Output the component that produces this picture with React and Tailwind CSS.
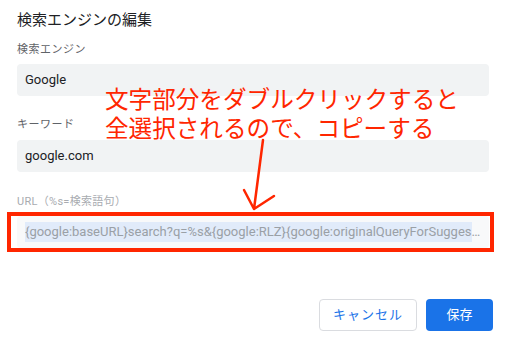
import React from 'react';

export default function App() {
    const inputBase = "h-[32px] rounded-[4px] px-[8px] flex items-center text-[13px]";

    return (
        <div className="relative w-[508px] h-[341px] bg-white overflow-hidden px-[17px] font-['Roboto','Noto_Sans_CJK_JP',sans-serif]">
            <h1 className="pt-[10px] text-[15px] leading-[20px] text-[#202124]">検索エンジンの編集</h1>

            <label className="block mt-[14px] text-[11px] leading-[12px] text-[#5f6368] tracking-[0.5px]">検索エンジン</label>
            <div className={`mt-[8px] w-[472px] bg-[#f1f3f4] text-[#202124] ${inputBase}`}>Google</div>

            <label className="block mt-[23px] text-[11px] leading-[12px] text-[#5f6368] tracking-[0.5px]">キーワード</label>
            <div className={`mt-[9px] w-[472px] bg-[#f1f3f4] text-[#202124] ${inputBase}`}>google.com</div>

            <label className="block mt-[24px] text-[11px] leading-[12px] text-[#a8abb0] tracking-[0.3px]">URL（%s=検索語句）</label>
            <div className={`mt-[8px] w-[472px] bg-[#f8f9fa] text-[#9aa0a6] ${inputBase} overflow-hidden whitespace-nowrap`}>
                <span className="bg-[#e1ebfa]">{'{google:baseURL}search?q=%s&{google:RLZ}{google:originalQueryForSugges'}</span>
                <span>…</span>
            </div>

            <div className="flex justify-end gap-[9px] mt-[51px] -mr-[2px]">
                <button className="h-[32px] w-[98px] rounded-[4px] border border-[#dadce0] bg-white text-[13px] text-[#1a73e8] tracking-[1px]">キャンセル</button>
                <button className="h-[32px] w-[67px] rounded-[4px] bg-[#1a73e8] text-[13px] text-white">保存</button>
            </div>

            {/* annotation overlay */}
            <div className="absolute left-[7px] top-[212px] w-[487px] h-[40px] border-[4px] border-[#ff2600]"></div>
            <div className="absolute left-[105px] top-[84px] text-[23.6px] leading-[29px] text-[#ff2600] font-['Noto_Sans_CJK_JP',sans-serif] whitespace-nowrap">
                <div>文字部分をダブルクリックすると</div>
                <div>全選択されるので、コピーする</div>
            </div>
            <svg className="absolute left-0 top-0" width="508" height="341" viewBox="0 0 508 341" fill="none">
                <path d="M263 140 L254 209 M244 190 L254 209 L274 196" stroke="#ff2600" strokeWidth="2.5" strokeLinecap="round" strokeLinejoin="round" />
            </svg>
        </div>
    );
}
